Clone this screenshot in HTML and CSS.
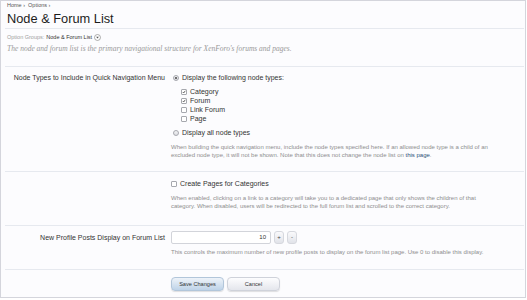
FILE: index.html
```html
<!DOCTYPE html>
<html lang="en">
<head>
  <meta charset="UTF-8" />
  <title>Node &amp; Forum List</title>
  <link rel="stylesheet" href="styles.css">
</head>
<body>
  <div class="page">
    <div class="breadcrumb">Home &rsaquo;&nbsp; Options &rsaquo;</div>
    <div class="title-bar">
      <h1 class="title">Node &amp; Forum List</h1>
    </div>

    <div class="groups">
      <span class="groups-label">Option Groups:</span>
      <span class="groups-value">Node &amp; Forum List</span>
      <span class="groups-toggle">
        <svg viewBox="0 0 8 8" width="7" height="7">
          <circle cx="4" cy="4" r="3.4" fill="#fff" stroke="#8a8a8a" stroke-width="0.8"/>
          <path d="M2.4 3.2 L4 5 L5.6 3.2 Z" fill="#555"/>
        </svg>
      </span>
    </div>
    <p class="intro">The node and forum list is the primary navigational structure for XenForo's forums and pages.</p>

    <form class="options">
      <div class="row row-nodes">
        <div class="row-label">Node Types to Include in Quick Navigation Menu</div>
        <div class="row-ctrl">
          <div class="choice"><span class="radio checked"></span>Display the following node types:</div>
          <ul class="node-list">
            <li class="choice"><span class="check"><svg viewBox="0 0 6 6"><path d="M1.2 3.1 L2.5 4.5 L4.9 1.2" fill="none" stroke="#333" stroke-width="1.1"/></svg></span>Category</li>
            <li class="choice"><span class="check"><svg viewBox="0 0 6 6"><path d="M1.2 3.1 L2.5 4.5 L4.9 1.2" fill="none" stroke="#333" stroke-width="1.1"/></svg></span>Forum</li>
            <li class="choice"><span class="check"></span>Link Forum</li>
            <li class="choice"><span class="check"></span>Page</li>
          </ul>
          <div class="choice choice-all"><span class="radio"></span>Display all node types</div>
          <p class="hint">When building the quick navigation menu, include the node types specified here. If an allowed node type is a child of an excluded node type, it will not be shown. Note that this does not change the node list on <a href="#">this page</a>.</p>
        </div>
      </div>

      <div class="row row-pages">
        <div class="row-label"></div>
        <div class="row-ctrl">
          <div class="choice"><span class="check"></span>Create Pages for Categories</div>
          <p class="hint">When enabled, clicking on a link to a category will take you to a dedicated page that only shows the children of that category. When disabled, users will be redirected to the full forum list and scrolled to the correct category.</p>
        </div>
      </div>

      <div class="row row-posts">
        <div class="row-label label-input">New Profile Posts Display on Forum List</div>
        <div class="row-ctrl">
          <div class="spinbox">
            <span class="spin-input">10</span>
            <span class="spin-btn">+</span>
            <span class="spin-btn">-</span>
          </div>
          <p class="hint hint-single">This controls the maximum number of new profile posts to display on the forum list page. Use 0 to disable this display.</p>
        </div>
      </div>

      <div class="row row-submit">
        <div class="row-label"></div>
        <div class="row-ctrl buttons">
          <span class="button primary">Save Changes</span>
          <span class="button">Cancel</span>
        </div>
      </div>
    </form>
  </div>
</body>
</html>
```

FILE: styles.css
```css
* {
  margin: 0;
  padding: 0;
  box-sizing: border-box;
}

body {
  font-family: "Liberation Sans", Arial, sans-serif;
  background: #fff;
  color: #333;
}

.page {
  width: 526px;
  height: 298px;
  border: 1.5px solid #d4d5dc;
  background: #fcfcfe;
  padding: 0 0 0 4px;
  overflow: hidden;
}

.breadcrumb {
  font-size: 5.5px;
  line-height: 7px;
  color: #555;
  padding-top: 1px;
  padding-left: 2px;
}

.title-bar {
  border-bottom: 1px solid #e6e9ef;
  padding: 2px 0 0 2px;
  height: 20px;
  margin-right: 1px;
}

.title {
  font-size: 12.8px;
  line-height: 16px;
  font-weight: normal;
  color: #1c1c1c;
}

.groups {
  display: flex;
  align-items: center;
  gap: 2px;
  font-size: 5.5px;
  line-height: 8px;
  margin-top: 4px;
  padding-left: 2px;
}

.groups-label {
  color: #a0a0a0;
}

.groups-value {
  color: #333;
}

.groups-toggle svg {
  display: block;
}

.intro {
  font-family: "Liberation Serif", "Times New Roman", serif;
  font-style: italic;
  font-size: 7.5px;
  line-height: 10px;
  color: #9a9a9a;
  margin-top: 3px;
  padding-left: 2px;
  padding-bottom: 12px;
  border-bottom: 1px solid #e6e9ef;
  margin-right: 1px;
}

.row {
  display: grid;
  grid-template-columns: 160px 1fr;
  column-gap: 6px;
  border-bottom: 1px solid #e6e9ef;
  margin-right: 1px;
}

.row-label {
  font-size: 7px;
  line-height: 9px;
  color: #333;
  text-align: right;
}

.row-ctrl {
  padding-right: 24px;
}

.choice {
  display: flex;
  align-items: center;
  gap: 3px;
  font-size: 7px;
  line-height: 9px;
  color: #333;
  list-style: none;
}

.radio,
.check {
  width: 6px;
  height: 6px;
  border: 0.8px solid #a6a8ae;
  flex-shrink: 0;
  position: relative;
}

.radio {
  border-radius: 50%;
  margin-left: 2px;
  background: linear-gradient(#f4f4f6, #dcdde2);
}

.radio.checked::after {
  content: '';
  position: absolute;
  left: 1.2px;
  top: 1.2px;
  width: 2px;
  height: 2px;
  border-radius: 50%;
  background: #444;
}

.check {
  border-radius: 1px;
  background: #fff;
}

.check svg {
  display: block;
  width: 100%;
  height: 100%;
}

.node-list {
  margin: 5px 0 0 10px;
}

.choice-all {
  margin-top: 5px;
}

.hint {
  font-size: 6px;
  line-height: 8px;
  color: #8e8e8e;
  margin-top: 6px;
}

.hint a {
  color: #2b4f78;
  text-decoration: none;
}

.row-nodes {
  padding: 6px 0 12px;
}

.row-pages {
  padding: 7px 0 15px;
}

.row-posts {
  padding: 5px 0 13px;
}

.label-input {
  line-height: 13px;
}

.spinbox {
  display: flex;
  align-items: center;
  gap: 3px;
}

.spin-input {
  width: 100px;
  height: 13px;
  border: 1px solid #d2d4da;
  border-radius: 2px;
  background: #fff;
  font-size: 6px;
  line-height: 11px;
  text-align: right;
  padding-right: 4px;
  color: #333;
}

.spin-btn {
  width: 10px;
  height: 13px;
  border: 1px solid #d6d8de;
  border-radius: 3px;
  background: linear-gradient(#fafafc, #e1e3e9);
  font-size: 6px;
  line-height: 11px;
  text-align: center;
  color: #444;
}

.hint-single {
  margin-top: 4px;
}

.row-submit {
  border-bottom: none;
  padding: 7px 0 0;
}

.buttons {
  display: flex;
  gap: 3px;
}

.button {
  display: inline-block;
  width: 53px;
  height: 14px;
  border: 1px solid #cfd2da;
  border-radius: 4px;
  background: linear-gradient(#fdfdfe, #e4e6ec);
  box-shadow: 0 1px 1px rgba(0, 0, 0, 0.12);
  font-size: 5.6px;
  line-height: 12px;
  text-align: center;
  color: #333;
}

.button.primary {
  border-color: #b2c6da;
  background: linear-gradient(#eef3f9, #bed3e8);
}
```
